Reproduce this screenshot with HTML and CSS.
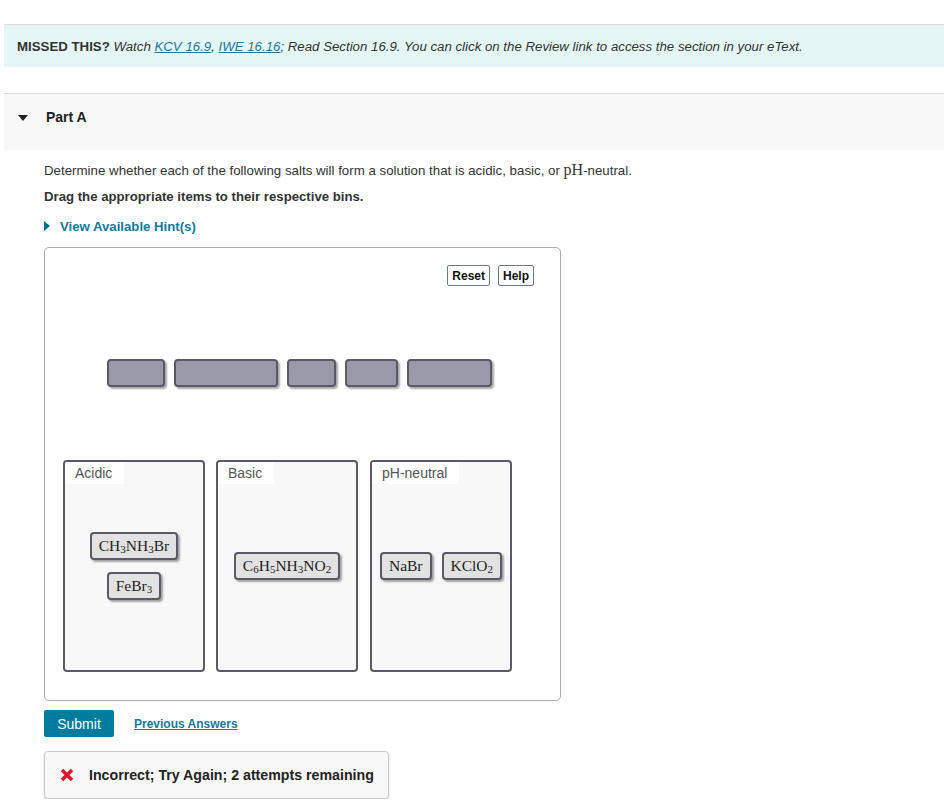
FILE: index.html
```html
<!DOCTYPE html>
<html lang="en">
<head>
	<meta charset="UTF-8">
	<title>Part A</title>
	<link rel="stylesheet" href="styles.css">
</head>
<body>
	<div class="page">
		<div class="missed">
			<b>MISSED THIS?</b> <i>Watch <a href="#">KCV 16.9</a>, <a href="#">IWE 16.16</a>; Read Section 16.9. You can click on the Review link to access the section in your eText.</i>
		</div>

		<div class="part-head">
			<span class="tri-down"></span>
			<span class="part-title">Part A</span>
		</div>

		<div class="part-body">
			<p class="intro">Determine whether each of the following salts will form a solution that is acidic, basic, or <span class="math">pH</span>-neutral.</p>
			<p class="drag">Drag the appropriate items to their respective bins.</p>
			<div class="hint"><span class="tri-right"></span><a href="#">View Available Hint(s)</a></div>

			<div class="dnd">
				<div class="tools">
					<button class="tool">Reset</button>
					<button class="tool">Help</button>
				</div>
				<div class="slots">
					<div class="slot" style="width:58px"></div>
					<div class="slot" style="width:104px"></div>
					<div class="slot" style="width:49px"></div>
					<div class="slot" style="width:53px"></div>
					<div class="slot" style="width:85px"></div>
				</div>
				<div class="bins">
					<div class="bin">
						<div class="bin-label">Acidic</div>
						<div class="bin-items">
							<div class="item">CH<sub>3</sub>NH<sub>3</sub>Br</div>
							<div class="item">FeBr<sub>3</sub></div>
						</div>
					</div>
					<div class="bin">
						<div class="bin-label">Basic</div>
						<div class="bin-items">
							<div class="item">C<sub>6</sub>H<sub>5</sub>NH<sub>3</sub>NO<sub>2</sub></div>
						</div>
					</div>
					<div class="bin">
						<div class="bin-label">pH-neutral</div>
						<div class="bin-items">
							<div class="item">NaBr</div>
							<div class="item">KClO<sub>2</sub></div>
						</div>
					</div>
				</div>
			</div>

			<div class="actions">
				<button class="submit">Submit</button>
				<a href="#" class="prev">Previous Answers</a>
			</div>

			<div class="feedback">
				<svg class="x-icon" width="14" height="14" viewBox="0 0 14 14">
					<path d="M2 2 L12 12 M12 2 L2 12" stroke="#e0112b" stroke-width="3.4" stroke-linecap="butt"/>
				</svg>
				<span>Incorrect; Try Again; 2 attempts remaining</span>
			</div>
		</div>
	</div>
</body>
</html>
```

FILE: styles.css
```css
body{
	margin: 0;
	font-family: "Liberation Sans", Arial, sans-serif;
	color: #333;
	background: #fff;
}
.page{
	margin-left: 4px;
	padding-top: 24px;
}
a{
	color: #1a7c9c;
}
.missed{
	border-top: 1px solid #dcdcdc;
	background: #e4f6f6;
	height: 42px;
	line-height: 44px;
	padding-left: 13px;
	font-size: 13.25px;
	color: #333;
}
.missed b{
	font-weight: bold;
}
.part-head{
	margin-top: 26px;
	border-top: 1px solid #dcdcdc;
	background: #f8f8f8;
	height: 57px;
	display: flex;
	align-items: flex-start;
	padding: 15px 0 0 14px;
	box-sizing: border-box;
}
.tri-down{
	width: 0;
	height: 0;
	border-left: 5px solid transparent;
	border-right: 5px solid transparent;
	border-top: 6px solid #222;
	margin: 6px 18px 0 0;
}
.part-title{
	font-weight: bold;
	font-size: 14px;
	line-height: 16px;
	color: #222;
}
.part-body{
	padding-left: 40px;
	padding-top: 11px;
}
.intro{
	margin: 0;
	font-size: 13.3px;
	line-height: 18px;
	color: #333;
}
.math{
	font-family: "Liberation Serif", "DejaVu Serif", serif;
	font-size: 16px;
}
.drag{
	margin: 9px 0 0 0;
	font-size: 13.2px;
	font-weight: bold;
	line-height: 16px;
	color: #333;
}
.hint{
	margin-top: 13px;
	display: flex;
	align-items: center;
	height: 16px;
}
.tri-right{
	width: 0;
	height: 0;
	border-top: 5px solid transparent;
	border-bottom: 5px solid transparent;
	border-left: 6px solid #0b6d8a;
	margin-right: 10px;
}
.hint a{
	font-size: 13.2px;
	font-weight: bold;
	color: #127a9a;
	text-decoration: none;
}
.dnd{
	margin-top: 13px;
	width: 515px;
	height: 452px;
	border: 1px solid #aaa;
	border-radius: 5px;
	position: relative;
}
.tools{
	display: flex;
	justify-content: flex-end;
	gap: 8px;
	padding: 17px 26px 0 0;
}
.tool{
	font-family: "Liberation Sans", Arial, sans-serif;
	font-size: 12px;
	font-weight: bold;
	color: #111;
	background: #fff;
	border: 1px solid #6b7b82;
	border-radius: 2px;
	height: 21px;
	padding: 0 4px;
	margin: 0;
}
.slots{
	display: flex;
	justify-content: center;
	gap: 9px;
	margin-top: 73px;
	padding-right: 6px;
}
.slot{
	height: 28px;
	box-sizing: border-box;
	background: #9a99aa;
	border: 2px solid #5a5a66;
	border-radius: 4px;
	box-shadow: 2px 2px 2px rgba(0,0,0,0.35);
}
.bins{
	display: flex;
	gap: 11px;
	margin-top: 73px;
	padding-left: 18px;
}
.bin{
	width: 142px;
	height: 212px;
	box-sizing: border-box;
	background: #f8f8f8;
	border: 2px solid #5a5a6a;
	border-radius: 4px;
	position: relative;
	display: flex;
	flex-direction: column;
	justify-content: center;
}
.bin:nth-child(3){
	margin-left: 1px;
}
.bin-label{
	position: absolute;
	left: 0;
	top: 0;
	background: #fff;
	font-size: 14px;
	color: #555;
	height: 22px;
	line-height: 22px;
	padding: 0 12px 0 10px;
	border-top-left-radius: 2px;
}
.bin-items{
	display: flex;
	flex-wrap: wrap;
	justify-content: center;
	gap: 12px 10px;
	padding: 0 4px;
}
.item{
	height: 28px;
	box-sizing: border-box;
	background: #e2e2e2;
	border: 2px solid #5a5a66;
	border-radius: 4px;
	box-shadow: 2px 2px 2px rgba(0,0,0,0.35);
	font-family: "Liberation Serif", "DejaVu Serif", serif;
	font-size: 15.5px;
	line-height: 23px;
	padding: 0 7px;
	color: #222;
}
.item sub{
	font-size: 11px;
	line-height: 0;
	vertical-align: -2px;
}
.actions{
	margin-top: 9px;
	display: flex;
	align-items: center;
	gap: 20px;
}
.submit{
	font-family: "Liberation Sans", Arial, sans-serif;
	width: 70px;
	height: 27px;
	background: #007c9c;
	color: #fff;
	border: none;
	border-radius: 2px;
	font-size: 14px;
	margin: 0;
	padding: 0;
}
.prev{
	font-size: 12px;
	font-weight: bold;
	color: #127a9a;
}
.feedback{
	margin-top: 14px;
	width: 345px;
	height: 48px;
	box-sizing: border-box;
	border: 1px solid #ccc;
	border-radius: 4px;
	background: #f8f8f8;
	box-shadow: 0 1px 2px rgba(0,0,0,0.2);
	display: flex;
	align-items: center;
	padding-left: 15px;
	font-size: 14.2px;
	font-weight: bold;
	color: #222;
}
.x-icon{
	margin-right: 15px;
}
```
